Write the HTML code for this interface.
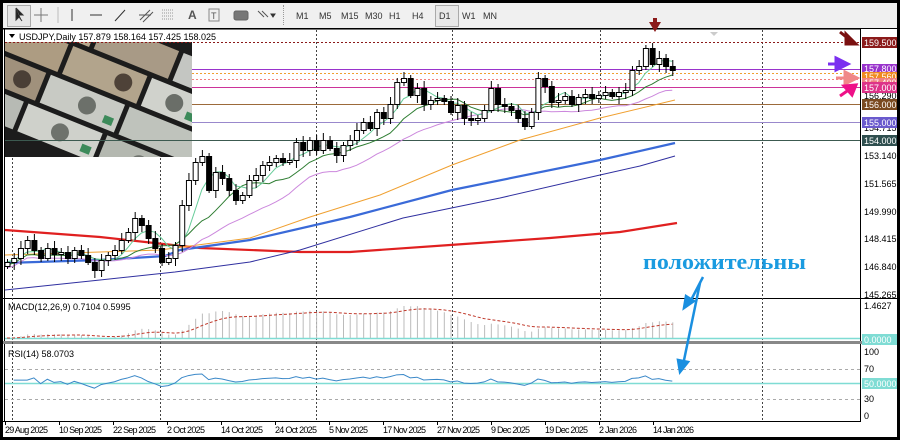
<!DOCTYPE html>
<html><head><meta charset="utf-8"><style>
*{margin:0;padding:0}
body{width:900px;height:440px;background:#000;overflow:hidden;font-family:"Liberation Sans",sans-serif;position:relative}
#tb{position:absolute;left:3px;top:3px;width:894px;height:25px;background:#f0f0f0}
.tf{position:absolute;top:8px;font-size:9px;color:#333}
svg{position:absolute;left:0;top:0}
</style></head><body>
<div id="tb">
<div style="position:absolute;left:4px;top:2px;width:22px;height:20px;border:1px solid #aaa;background:#e6e6e6"></div>
<div style="position:absolute;left:280px;top:2px;width:2px;height:20px;border-left:1px dotted #999"></div>
<div style="position:absolute;left:432px;top:2px;width:22px;height:20px;border:1px solid #aaa;background:#e8e8e8"></div>
<span class="tf" style="left:293px">M1</span><span class="tf" style="left:316px">M5</span><span class="tf" style="left:338px">M15</span><span class="tf" style="left:362px">M30</span><span class="tf" style="left:386px">H1</span><span class="tf" style="left:409px">H4</span><span class="tf" style="left:436px">D1</span><span class="tf" style="left:459px">W1</span><span class="tf" style="left:480px">MN</span>
<span style="position:absolute;left:185px;top:5px;font-size:12px;font-weight:bold;color:#555">A</span>
</div>
<svg width="900" height="440" id="s" xmlns="http://www.w3.org/2000/svg">
<g stroke="#333" fill="none" stroke-width="1">
<path d="M16 8 L16 20 L19 17 L22 21 M16 8 L23 15 L19 15" fill="#222"/>
<path d="M41 8 V22 M34 15 H48" stroke="#777"/>
<path d="M58 7 V23" stroke="#bbb"/>
<path d="M72 9 V21"/><path d="M90 15 H102"/><path d="M115 21 L125 10"/>
<path d="M140 20 L150 10 M143 22 L153 12 M139 15 L151 15" stroke="#555"/>
<path d="M162 10 H174 M162 13 H174 M162 16 H174 M162 19 H174" stroke="#999" stroke-dasharray="1 1"/>
<rect x="209" y="9" width="10" height="12" stroke="#888"/>
<rect x="234" y="11" width="14" height="9" rx="2" fill="#777" stroke="#666"/>
<path d="M258 11 L264 17 M262 11 L268 17" stroke="#555"/><path d="M271 14 L275 14 L273 17 Z" fill="#333"/>
</g>
<text x="211" y="19" font-size="9" fill="#555" font-family="Liberation Sans">T</text>
<rect x="3" y="29" width="894" height="408" fill="#fff"/>
<line x1="860.5" y1="29" x2="860.5" y2="422" stroke="#000"/>
<line x1="3" y1="29.5" x2="860" y2="29.5" stroke="#777"/>
<line x1="4.5" y1="29" x2="4.5" y2="422" stroke="#000"/>
<line x1="3" y1="298.5" x2="897" y2="298.5" stroke="#000"/>
<rect x="3" y="341" width="894" height="3" fill="#888"/>
<line x1="3" y1="421.5" x2="861" y2="421.5" stroke="#000"/>
<g id="vl" stroke="#444" stroke-dasharray="2 2"></g>
<g>
<clipPath id="pc"><rect x="5" y="42" width="187" height="115"/></clipPath>
<g clip-path="url(#pc)">
<rect x="5" y="42" width="187" height="115" fill="#1c1c1c"/>
<g transform="rotate(22 100 100)">
<rect x="-10" y="25" width="80" height="30" fill="#b9a98f"/><rect x="75" y="25" width="80" height="30" fill="#a89a86"/><rect x="160" y="25" width="70" height="30" fill="#c4c6c2"/>
<rect x="-30" y="60" width="80" height="30" fill="#ad9c82"/><rect x="55" y="60" width="80" height="30" fill="#b2a48c"/><rect x="140" y="60" width="80" height="30" fill="#d0d2cc"/>
<rect x="-40" y="95" width="80" height="30" fill="#a0917c"/><rect x="45" y="95" width="80" height="30" fill="#c8cac4"/><rect x="130" y="95" width="80" height="30" fill="#bfc3bc"/>
<rect x="-50" y="130" width="80" height="30" fill="#b7bab4"/><rect x="35" y="130" width="80" height="30" fill="#cfd1cb"/><rect x="120" y="130" width="80" height="30" fill="#b4b8b0"/>
<circle cx="40" cy="40" r="9" fill="#5a4b3e"/><circle cx="115" cy="75" r="9" fill="#4e4238"/><circle cx="20" cy="110" r="9" fill="#4a3f36"/>
<circle cx="90" cy="110" r="9" fill="#6c706a"/><circle cx="170" cy="75" r="9" fill="#6a6e68"/><circle cx="75" cy="145" r="9" fill="#6e726c"/><circle cx="160" cy="145" r="9" fill="#70746e"/>
<rect x="110" y="112" width="10" height="8" fill="#3d8a5a"/><rect x="185" y="78" width="10" height="8" fill="#3d8a5a"/><rect x="100" y="147" width="10" height="8" fill="#3d8a5a"/>
</g></g></g>
<g font-family="Liberation Sans" font-size="9" fill="#000">
<rect x="5" y="30" width="187" height="12" fill="#fff"/>
<path d="M9 34 L15 34 L12 38 Z" fill="#000"/>
<text x="19" y="40">USDJPY,Daily  157.879 158.164 157.425 158.025</text>
</g>
<g stroke-width="1">
<line x1="5" y1="42.5" x2="860" y2="42.5" stroke="#8b1a1a" stroke-dasharray="2 2"/>
<line x1="192" y1="69.5" x2="860" y2="69.5" stroke="#9933cc"/>
<line x1="192" y1="73.5" x2="860" y2="73.5" stroke="#f0a030" stroke-dasharray="2 2"/>
<line x1="192" y1="79.5" x2="860" y2="79.5" stroke="#f08080" stroke-dasharray="2 2"/>
<line x1="192" y1="87.5" x2="860" y2="87.5" stroke="#cc3399"/>
<line x1="192" y1="104.5" x2="860" y2="104.5" stroke="#9c6a3a"/>
<line x1="192" y1="122.5" x2="860" y2="122.5" stroke="#9988cc"/>
<line x1="5" y1="140.5" x2="860" y2="140.5" stroke="#3c5a50"/>
</g>
<g id="ma"></g>
<g id="cd"></g>
<line x1="5" y1="338.5" x2="860" y2="338.5" stroke="#7fdcd4" stroke-width="1.5"/>
<g id="mh" stroke="#bbb"></g>
<polyline id="ms" fill="none" stroke="#c0392b" stroke-dasharray="3 2"/>
<line x1="5" y1="369.5" x2="860" y2="369.5" stroke="#aaa" stroke-dasharray="3 3"/>
<line x1="5" y1="399.5" x2="860" y2="399.5" stroke="#aaa" stroke-dasharray="3 3"/>
<line x1="5" y1="383.5" x2="860" y2="383.5" stroke="#7fdcd4" stroke-width="1.5"/>
<polyline id="rl" fill="none" stroke="#3a88c8"/>
<g font-family="Liberation Sans" font-size="9">
<text x="8" y="310">MACD(12,26,9) 0.7104 0.5995</text>
<text x="8" y="357">RSI(14) 58.0703</text>
</g>
<g font-family="Liberation Sans" font-size="9" fill="#000">
<text x="864" y="99">156.290</text><text x="864" y="131">154.715</text><text x="864" y="159">153.140</text><text x="864" y="187">151.565</text><text x="864" y="215">149.990</text><text x="864" y="242">148.415</text><text x="864" y="270">146.840</text><text x="864" y="298">145.265</text>
<text x="864" y="309">1.4627</text>
<text x="864" y="355">100</text><text x="864" y="372">70</text><text x="864" y="402">30</text><text x="864" y="419">0</text>
</g>
<g font-family="Liberation Sans" font-size="9" fill="#fff">
<rect x="862" y="37" width="35" height="11" fill="#8b1a1a"/><text x="864" y="46">159.500</text>
<rect x="862" y="64" width="35" height="10" fill="#9933cc"/><text x="864" y="72">157.800</text>
<rect x="862" y="72" width="35" height="9" fill="#f08a20"/><text x="864" y="80">157.560</text>
<rect x="862" y="78" width="35" height="9" fill="#f08080"/><text x="864" y="86">157.400</text>
<rect x="862" y="82" width="35" height="11" fill="#dd3388"/><text x="864" y="91">157.000</text>
<rect x="862" y="99" width="35" height="11" fill="#7a4a20"/><text x="864" y="108">156.000</text>
<rect x="862" y="117" width="35" height="11" fill="#6a5acd"/><text x="864" y="126">155.000</text>
<rect x="862" y="135" width="35" height="11" fill="#2f4f4f"/><text x="864" y="144">154.000</text>
<rect x="862" y="334" width="35" height="11" fill="#7fdcd4"/><text x="864" y="343">0.0000</text>
<rect x="862" y="378" width="35" height="11" fill="#7fdcd4"/><text x="864" y="387">50.0000</text>
</g>
<g stroke="#000" id="tk"></g>
<g font-family="Liberation Sans" font-size="9" fill="#000" lengthAdjust="spacingAndGlyphs">
<text x="5" y="433" textLength="43">29 Aug 2025</text><text x="59" y="433" textLength="43">10 Sep 2025</text><text x="113" y="433" textLength="43">22 Sep 2025</text><text x="167" y="433" textLength="38">2 Oct 2025</text><text x="221" y="433" textLength="42">14 Oct 2025</text><text x="275" y="433" textLength="42">24 Oct 2025</text><text x="329" y="433" textLength="39">5 Nov 2025</text><text x="383" y="433" textLength="43">17 Nov 2025</text><text x="437" y="433" textLength="43">27 Nov 2025</text><text x="491" y="433" textLength="39">9 Dec 2025</text><text x="545" y="433" textLength="43">19 Dec 2025</text><text x="599" y="433" textLength="38">2 Jan 2026</text><text x="653" y="433" textLength="41">14 Jan 2026</text>
</g>
<text x="643" y="269" font-family="Liberation Serif" font-weight="bold" font-size="22" fill="#1a9be0" textLength="163" lengthAdjust="spacingAndGlyphs">положительны</text>
<g stroke="#1a8fe0" stroke-width="2.5" fill="#1a8fe0">
<line x1="703" y1="277" x2="690" y2="302"/><path d="M684 308 L686 296 L694 301 Z"/>
<line x1="700" y1="283" x2="683" y2="365"/><path d="M680 372 L678 360 L688 362 Z"/>
</g>
<path d="M649 22 L661 22 L655 32 Z M653 18 h4 v5 h-4Z" fill="#8b1a1a"/>
<path d="M710 32 L718 32 L714 36Z" fill="#ccc"/>
<path d="M840 32 L850 40 M846 34 L856 44 L846 44 Z" stroke="#7a1010" stroke-width="3" fill="#7a1010"/>
<path d="M828 64 L840 64 M836 58 L848 64 L836 70 Z" stroke="#7b2ff0" stroke-width="3" fill="#7b2ff0"/>
<path d="M836 78 L848 78 M845 72 L857 78 L845 84 Z" stroke="#f08888" stroke-width="3" fill="#f08888"/>
<path d="M840 96 L850 89 M844 86 L856 85 L852 95 Z" stroke="#ee1188" stroke-width="3" fill="#ee1188"/>
<rect x="0" y="437" width="900" height="3" fill="#000"/>
</svg>
<script>
var C=[262,258,248,240,250,258,248,254,252,258,250,255,262,270,260,255,250,240,232,218,225,238,248,262,258,245,205,180,162,156,190,172,178,190,200,195,180,175,165,162,158,162,160,142,150,140,150,140,148,155,145,140,130,122,128,112,118,104,82,78,95,88,104,100,98,101,112,105,118,120,118,110,88,104,106,110,118,126,112,78,86,102,100,96,104,97,94,98,95,92,96,92,90,70,66,48,64,58,66,70];
var NS="http://www.w3.org/2000/svg";
function el(t,a,p){var e=document.createElementNS(NS,t);for(var k in a)e.setAttribute(k,a[k]);p.appendChild(e);return e;}
var X=function(i){return 7+i*6.72};
var vl=document.getElementById('vl');
[12,160,316,452,600,762].forEach(function(x){el('line',{x1:x+.5,y1:30,x2:x+.5,y2:422},vl)});
var tk=document.getElementById('tk');
[5,59,113,167,221,275,329,383,437,491,545,599,653].forEach(function(x){el('line',{x1:x+.5,y1:421,x2:x+.5,y2:425},tk)});
var cd=document.getElementById('cd');
for(var i=0;i<C.length;i++){var o=i?C[i-1]:266,c=C[i],x=X(i);var t=Math.min(o,c),b=Math.max(o,c);var h=t-3-(i*7%5),l=b+3+(i*11%6);
el('line',{x1:x+.5,y1:h,x2:x+.5,y2:l,stroke:'#000'},cd);
el('rect',{x:x-2,y:t+.5,width:5,height:Math.max(1,b-t),fill:c<o?'#fff':'#000',stroke:'#000','stroke-width':1},cd);}
var ma=document.getElementById('ma');
function sma(n){var p=[];for(var i=0;i<C.length;i++){var s=0,k=0;for(var j=Math.max(0,i-n+1);j<=i;j++){s+=C[j];k++;}p.push(X(i)+','+(s/k+ (n==20?6:n==10?3:0)));}return p.join(' ');}
function pl(pts,col,w){el('polyline',{points:pts,fill:'none',stroke:col,'stroke-width':w},ma);}
pl('5,230 100,237 200,248 300,252 350,252 450,245 550,238 620,232 677,223','#e02020',2.2);
pl('5,290 100,280 175,272 250,262 300,250 403,218 500,198 600,175 640,166 675,156','#3030a0',1);
pl('5,263 100,260 165,256 180,250 250,240 350,217 452,190 600,160 675,143','#3a6ad8',2.2);
pl('5,255 100,252 160,250 175,248 250,238 310,217 380,195 452,165 520,140 600,118 675,100','#f0a030',1);
pl(sma(20),'#cc88dd',1);pl(sma(10),'#2e7d32',1);pl(sma(5),'#66cc99',1);
function ema(n){var k=2/(n+1),e=-C[0],r=[];for(var i=0;i<C.length;i++){e=-C[i]*k+e*(1-k);r.push(e);}return r;}
var e12=ema(12),e26=ema(26),m=[],sp=[];
for(var i=0;i<C.length;i++){m.push(e12[i]-e26[i]);}
var mx=Math.max.apply(null,m),sc=32/mx,sg=m[0];
var mh=document.getElementById('mh');
for(var i=0;i<C.length;i++){sg=sg*0.8+m[i]*0.2;var hh=m[i]*sc;if(hh>0)el('line',{x1:X(i)+.5,y1:338,x2:X(i)+.5,y2:338-hh},mh);sp.push(X(i)+','+Math.min(338,338-sg*sc));}
document.getElementById('ms').setAttribute('points',sp.join(' '));
var rp=[],ag=0,al=0;
for(var i=1;i<C.length;i++){var d=C[i-1]-C[i];var g=d>0?d:0,lo=d<0?-d:0;ag=(ag*13+g)/14;al=(al*13+lo)/14;var r=al==0?60:100-100/(1+ag/al);r=50+(r-50)*0.6;rp.push(X(i)+','+(416-r*0.64));}
document.getElementById('rl').setAttribute('points',rp.join(' '));
</script>
</body></html>
